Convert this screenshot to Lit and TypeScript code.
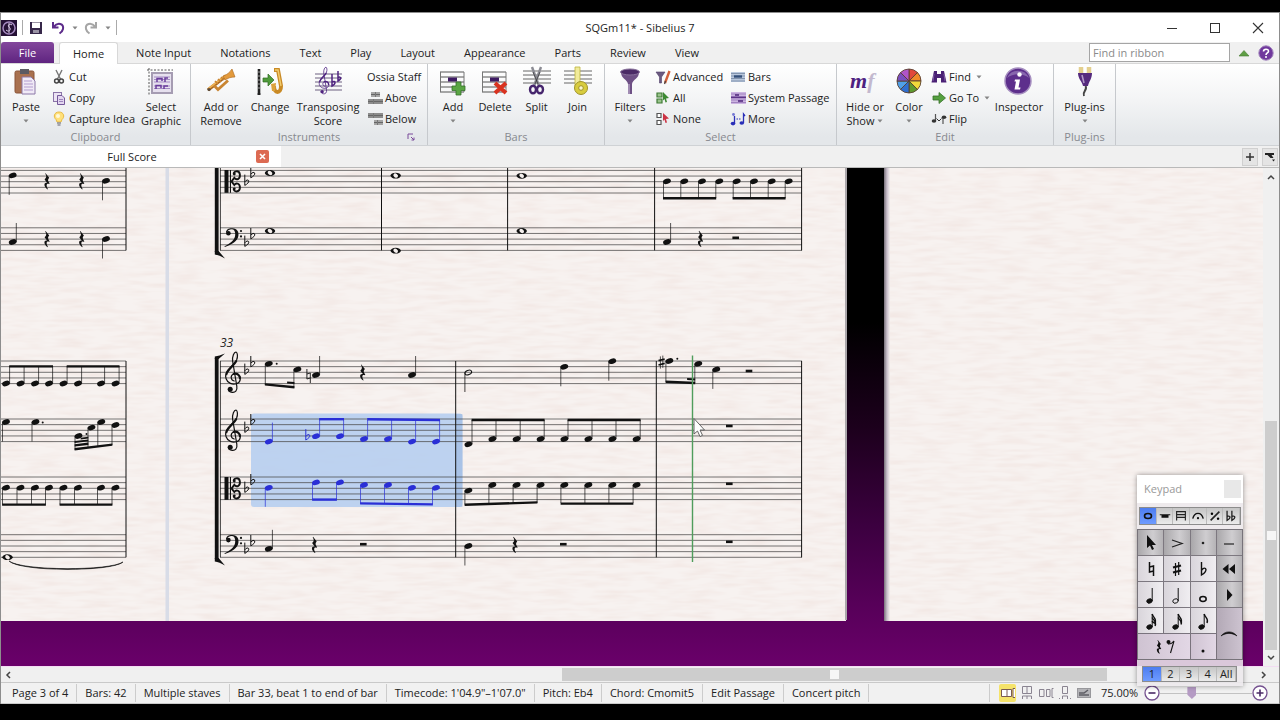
import { LitElement, html, svg, css } from "lit";
import { customElement } from "lit/decorators.js";

const INK = "#111";
const BLUE = "#2a2fd6";

/* ---------- notation primitives ---------- */

const line = (x1: number, y1: number, x2: number, y2: number, c = INK, w = 0.8) =>
  svg`<line x1=${x1} y1=${y1} x2=${x2} y2=${y2} stroke=${c} stroke-width=${w} />`;

const head = (x: number, y: number, c = INK) =>
  svg`<ellipse cx=${x} cy=${y} rx="4" ry="2.6" fill=${c} transform="rotate(-18 ${x} ${y})" />`;

const whole = (x: number, y: number) => svg`
  <ellipse cx=${x} cy=${y} rx="5.2" ry="2.9" fill=${INK} />
  <ellipse cx=${x} cy=${y} rx="2.5" ry="1.9" fill="#f5efed" transform="rotate(35 ${x} ${y})" />`;

const half = (x: number, y: number) => svg`
  <ellipse cx=${x} cy=${y} rx="3.5" ry="2.2" fill="none" stroke=${INK} stroke-width="1" transform="rotate(-22 ${x} ${y})" />
  ${line(x - 3.4, y, x - 3.4, y + 19.5)}`;

const up = (x: number, y: number, to = y - 19, c = INK) => svg`${head(x, y, c)}${line(x + 3.6, y, x + 3.6, to, c, 0.7)}`;
const down = (x: number, y: number, to = y + 19.5, c = INK) => svg`${head(x, y, c)}${line(x - 3.5, y, x - 3.5, to, c, 0.7)}`;

const beam = (x1: number, y1: number, x2: number, y2: number, c = INK, w = 2.4) =>
  svg`<path d="M${x1 - 0.4} ${y1 - w / 2}L${x2 + 0.4} ${y2 - w / 2}V${y2 + w / 2}L${x1 - 0.4} ${y1 + w / 2}Z" fill=${c} />`;

const dot = (x: number, y: number) => svg`<circle cx=${x} cy=${y} r="1" fill=${INK} />`;

const restQ = (x: number, y: number) => svg`
  <path transform="translate(${x} ${y})" fill=${INK}
    d="M-1.4 -8.2L2.2 -3.6C.6 -1.9 .6 -.8 2.6 2.2L2.2 2.7C-.2 1.6 -1.4 3.6 .9 7.6L.5 8C-3.8 4.8 -3.2 .8 .2 1.5L-2.4 -1.9C-.4 -3.8 -.2 -5.2 -1.8 -7.8Z" />`;
const restH = (x: number, y: number) => svg`<rect x=${x - 3.3} y=${y - 1.3} width="6.6" height="2.6" fill=${INK} />`;

const flat = (x: number, y: number, c = INK) => svg`
  <path transform="translate(${x} ${y})" fill="none" stroke=${c} stroke-width="1"
    d="M-1.9 -7.4V3.4C.6 2 2.6 .2 2 -1.4C1.4 -2.6 -.6 -2 -1.9 -.2" />`;
const natural = (x: number, y: number) => svg`
  <path transform="translate(${x} ${y})" fill="none" stroke=${INK} stroke-width=".9"
    d="M-1.6 -7V3L1.8 2M1.8 7V-3L-1.6 -2" />`;
const sharp = (x: number, y: number) => svg`
  <path transform="translate(${x} ${y})" fill="none" stroke=${INK} stroke-width=".7"
    d="M-1.1 -5.6V6.6M1.3 -6.4V5.8" />
  <path transform="translate(${x} ${y})" stroke=${INK} stroke-width="1.7" d="M-3 -1.4L3.2 -3M-3 3L3.2 1.4" />`;

const trebleShape = svg`
  <path fill="none" stroke="currentColor" stroke-width="1.2" stroke-linecap="round"
    d="M1.2 -2.6C-2.4 -3.4 -3 -8 .6 -9.6C4.6 -11.2 8 -7.6 7.2 -3.8C6.4 .2 1 1.4 -2.6 -.2C-7 -2.2 -8.4 -7 -6.4 -11.4C-4.4 -15.6 1.4 -19.2 3.6 -23.6C5 -26.8 4.6 -31 3 -31.6C1 -31.4 -.8 -27.6 -.4 -22.6L3.8 2.6C4.6 7.2 2 9.2 -.8 8.8C-3 8.6 -4.6 7 -4.6 5.4" />
  <path fill="none" stroke="currentColor" stroke-width="2.1" stroke-linecap="round"
    d="M-6.6 -9.4C-5.6 -14 .6 -17.6 3.2 -22.4M.6 -9.6C4 -10.8 7 -8.4 6.9 -5.2" />
  <circle cx="-2.8" cy="5.6" r="2.5" fill="currentColor" />`;
const treble = (x: number, y: number) => svg`<g transform="translate(${x} ${y})" color=${INK}>${trebleShape}</g>`;

const bass = (x: number, y: number) => svg`
  <g transform="translate(${x} ${y})" fill=${INK}>
    <path d="M-8 5.4C-8.4 1.4 -4.6 .2 -1.6 .4C3.4 .8 5 4 4.4 8C3.6 13.2 -2 17 -9.2 19.2L-9.5 18.5C-3.8 15.8 1 12.4 1.2 7C1.4 3.4 .2 1.4 -2.4 1.4C-4.6 1.4 -6 2.4 -6.4 3.4Z" />
    <circle cx="-5.6" cy="5.4" r="2.3" />
    <circle cx="7" cy="3.2" r="1.1" /><circle cx="7" cy="8.6" r="1.1" />
  </g>`;

const alto = (x: number, y: number) => svg`
  <g transform="translate(${x} ${y})" fill=${INK}>
    <rect x="-8.8" y="0" width="4" height="22.8" />
    <rect x="-3.4" y="0" width="1.1" height="22.8" />
    <path fill="none" stroke=${INK} stroke-width="1.900" d="M.4 4.2C0 .8 6 -.2 6.6 4.6C7 9.4 3 10.6 1 7.8L-1.8 11.4L1 15C3 12.2 7 13.4 6.6 18.2C6 23 0 22 .4 18.6" />
    <circle cx="1" cy="4" r="1.4" /><circle cx="1" cy="18.8" r="1.4" />
  </g>`;

const staff = (x1: number, x2: number, top: number) =>
  [0, 1, 2, 3, 4].map((i) => line(x1, top + i * 5.65, x2, top + i * 5.65, "#4a4848", 0.75));

const keyOf = (y: number) => svg`${flat(246.7, y)}${flat(252.7, y - 7.6)}`;

/* ---------- the visible music ---------- */

const systemsLeft = svg`
  ${staff(0, 126, 170.4)}${staff(0, 126, 227.8)}
  ${line(126, 160, 126, 250.4, INK, 1)}
  ${down(12.7, 175.4)}${restQ(47, 181.4)}${restQ(81.7, 181.4)}${down(106, 180.8)}
  ${up(12.7, 242)}${restQ(47, 239.2)}${restQ(81.7, 239.2)}${down(106, 239)}

  ${[361, 419, 477, 534.7].map((t) => staff(0, 126, t))}
  ${line(126, 361, 126, 557.3, INK, 1)}
  ${[6, 20.5, 35, 49, 63.5, 78, 101, 115.5].map((x) => svg`${up(x, 383.5, 366)}${down(x, 487.7, 504.5)}`)}
  ${beam(9.6, 366.4, 52.6, 366.4)}${beam(67.1, 366.4, 119.1, 366.4)}
  ${beam(2.5, 504.6, 45.5, 504.6)}${beam(60, 504.6, 112, 504.6)}
  ${down(6, 422)}${down(35.5, 422)}${dot(42.7, 422.6)}
  ${down(78.5, 436, 450)}${dot(86.5, 434)}${down(91.5, 427.6, 448)}${down(101.3, 422, 447)}${down(115.5, 425, 445)}
  ${beam(75, 449.3, 112, 444.6)}${beam(75, 445.4, 88, 443.8)}${beam(75, 442, 88, 440.4, INK, 1.8)}${beam(81, 438.6, 88, 437.6, INK, 1.8)}
  ${whole(7.5, 557.2)}
  <path d="M9 561C20 572 112 572 123 562C110 571 22 571 9 561Z" fill=${INK} stroke=${INK} stroke-width=".6" />`;

const bracket = (top: number, bottom: number) => svg`
  <rect x="214.8" y=${top} width="3.8" height=${bottom - top} fill=${INK} />
  <path d="M214.8 ${bottom - 1}H218.6L225 ${bottom + 6.5}C221 ${bottom + 4} 218 ${bottom + 3} 214.8 ${bottom + 2.4}Z" fill=${INK} />
  <path d="M214.8 ${top + 1}H218.6L225 ${top - 4.5}C221 ${top - 3} 218 ${top - 2} 214.8 ${top - 1.4}Z" fill=${INK} />`;

const upperSystem = svg`
  ${staff(220, 802, 170.4)}${staff(220, 802, 227.8)}
  ${bracket(100, 252)}
  ${line(220.4, 150, 220.4, 250.4)}
  ${[381.5, 507.6, 654.6, 801.6].map((x) => line(x, 150, x, 250.4, INK, 1))}
  ${alto(233.3, 170)}${bass(234, 227.8)}
  ${keyOf(182)}${keyOf(243)}
  ${whole(270, 173)}${whole(395.7, 175.6)}${whole(521.7, 175.8)}
  ${[667, 684.3, 702, 719.3, 736.7, 754, 771.7, 788.7].map((x) => down(x, 181.3, 198))}
  ${beam(663.4, 198.2, 715.8, 198.2)}${beam(733, 198.2, 785.2, 198.2)}
  ${whole(270, 231)}${whole(395.7, 250.7)}${whole(521.7, 231)}
  ${up(667, 242)}${restQ(700.5, 239)}${restH(735.7, 237.8)}`;

const lowerSystem = svg`
  ${[361, 419, 477, 534.7].map((t) => staff(220, 802, t))}
  ${bracket(358, 559)}
  ${line(220.4, 361, 220.4, 557.3)}
  ${[455.7, 656.3, 801.6].map((x) => line(x, 361, x, 557.3, INK, 1))}
  <text x="220" y="347" class="barnum">33</text>
  ${treble(233, 383.6)}${treble(233, 441.6)}${alto(233.3, 477)}${bass(234, 534.7)}
  ${keyOf(371)}${keyOf(429)}${keyOf(489)}${keyOf(550)}

  ${down(268.8, 363.8, 385)}${dot(276.7, 363.8)}${down(297.4, 369.4, 388)}
  ${beam(265.3, 384.4, 294, 387.2)}${beam(287.5, 382.4, 294, 383, INK, 2)}
  ${natural(308.5, 376)}${up(316, 375)}${restQ(362.7, 372.6)}${up(412, 375)}
  ${half(468.3, 372.5)}${down(564.3, 366.8)}${down(612.3, 361.2)}
  ${sharp(661.5, 362)}${down(669.4, 361, 382)}${dot(677.3, 358.8)}${down(698.3, 363.8, 383)}
  ${beam(666, 381.8, 694.8, 383)}${beam(687.5, 379, 694.8, 379.4, INK, 2)}
  ${down(716.3, 369.4)}${restH(749, 371)}

  ${up(268.8, 441.6, 422.6, BLUE)}${flat(307.7, 436.6, BLUE)}
  ${up(316, 436.2, 418.7, BLUE)}${up(340, 436.2, 418.7, BLUE)}${beam(319.6, 419.2, 343.6, 419.2, BLUE)}
  ${[[364, 439], [388, 439], [412, 441.6], [436, 441.6]].map(([x, y]) => up(x, y, 420, BLUE))}
  ${beam(367.6, 419.2, 439.6, 420, BLUE)}
  ${up(468.4, 444.3, 420)}
  ${[492.4, 516.6, 540.6, 564.4, 588.4, 612.4, 636.6].map((x) => up(x, 439, 420))}
  ${beam(472, 420, 544.2, 420)}${beam(568, 420, 640.2, 420)}${restH(729.3, 426)}

  ${down(268.8, 487.8, 506.8, BLUE)}
  ${down(316, 482.4, 499.4, BLUE)}${down(340, 482.4, 499.4, BLUE)}${beam(312.5, 499.6, 336.5, 499.6, BLUE)}
  ${[[364, 485], [388, 485], [412, 487.8], [436, 487.8]].map(([x, y]) => down(x, y, 504, BLUE))}
  ${beam(360.5, 503.4, 432.5, 504.4, BLUE)}
  ${down(468.4, 490.6, 504.6)}
  ${[492.4, 516.6, 540.6, 564.4, 588.4, 612.4, 636.6].map((x) => down(x, 485, 503))}
  ${beam(465, 504.8, 537, 502.4)}${beam(561, 503.6, 633, 503.6)}${restH(729.3, 483.8)}

  ${up(268.8, 548.8)}${restQ(314.5, 545)}${restH(363.3, 544.2)}
  ${down(468.4, 546)}${restQ(515, 545)}${restH(563.3, 544.2)}${restH(729.3, 541.8)}`;

/* ---------- icons ---------- */

const i32 = (body: unknown) => html`<svg class="i32" viewBox="0 0 32 32" aria-hidden="true">${body}</svg>`;
const i16 = (body: unknown) => html`<svg class="i16" viewBox="0 0 16 16" aria-hidden="true">${body}</svg>`;
const caret = html`<svg class="caret" viewBox="0 0 6 4" aria-hidden="true"><path d="M.5 .5H5.5L3 3.5Z" fill="#858585" /></svg>`;
const rows = (x1: number, x2: number, ys: number[], c = "#555") => ys.map((y) => line(x1, y, x2, y, c, 1));

const big = {
  paste: svg`<rect x="5" y="5" width="19" height="22" rx="1.5" fill="#a9714f" stroke="#8a5538" /><rect x="10" y="3" width="9" height="5" fill="#5b5b62" />
    <path d="M12 11H21L25 15V28H12Z" fill="#f0eaf6" stroke="#8c78a8" /><path d="M14 15H22M14 18H23M14 21H23M14 24H23" stroke="#b39ccf" />`,
  select: svg`<rect x="7" y="7" width="20" height="20" fill="#e6e0ee" stroke="#a59cb2" stroke-width="2" />
    <path d="M9 11H25M9 13.500H25M9 16H25M9 20H25M9 22.500H25" stroke="#a38bc2" /><path d="M12 16V12.500H17V15M20 16V12H23M11 23V19.500H16V22M19 23V20H23" stroke="#6a3c9c" stroke-width="1.500" fill="none" />
    <path d="M4 2V30M2 4H28" stroke="#555" stroke-dasharray="2 1.5" fill="none" />`,
  trumpet: svg`<path d="M3 24L21 10" stroke="#a8651c" stroke-width="3.4" /><path d="M3 23L21 9" stroke="#efb252" stroke-width="1.6" /><path d="M18 10C22 9 25 6 27 3L30 11C26 11 23 12 20 14Z" fill="#e39a3c" stroke="#a8651c" stroke-width=".6" />
    <path d="M9 19.500L13 23.500L23 14.500" fill="none" stroke="#c98532" stroke-width="2.800" /><path d="M10 15L13 18M13 13L16 16M16 11L19 14" stroke="#c98532" stroke-width="1.6" /><circle cx="4" cy="23.5" r="1.6" fill="#5b4a3a" />`,
  change: svg`<path d="M5 3V27" stroke="#222" stroke-width="2.6" /><path d="M5 5V25" stroke="#bbb" stroke-width=".8" stroke-dasharray="2 2" /><path d="M3.500 28H6.500" stroke="#222" stroke-width="2" />
    <path d="M20 4H24L27 20C27 28 20 28 20 20" fill="none" stroke="#c98a25" stroke-width="4" /><path d="M21 4H24L27 20" fill="none" stroke="#f2cd6e" stroke-width="1.400" /><path d="M17 18L22 17L21 25H18Z" fill="#dca23d" />
    <path d="M9 12H14V8L20 14L14 20V16H9Z" fill="#4f9a3a" stroke="#2f6b23" stroke-width=".7" />`,
  transposing: svg`${rows(3, 30, [8, 12, 16, 20, 24], "#6d6080")}<g transform="translate(12 22) scale(.66)" color="#4f2380">${trebleShape}</g>
    <path d="M20 8V20C24 18 24 14 20 16M26 5V15C30 13 29 10 26 11.500" fill="none" stroke="#4f2380" stroke-width="1.500" />`,
  add: svg`${rows(3, 27, [6, 11, 16, 21, 26])}<path d="M3.500 6V26M27 6V26" stroke="#777" /><rect x="11" y="11.500" width="9" height="4" fill="#3e1b63" /><path d="M19 16H24V20H28V24.500H24V29H19V24.500H15V20H19Z" fill="#5aa544" stroke="#33702a" stroke-width=".8" />`,
  del: svg`${rows(3, 27, [6, 11, 16, 21, 26])}<path d="M3.500 6V26M27 6V26" stroke="#777" /><rect x="11" y="11.500" width="9" height="4" fill="#3e1b63" /><path d="M16 17L27 27M27 17L16 27" stroke="#d93320" stroke-width="4" />`,
  split: svg`${rows(2, 30, [5, 9, 13, 17], "#666")}<path d="M11 1L18 20M20 1L13 20" stroke="#8b8b93" stroke-width="2.400" /><path d="M12 6L17 18M19 6L14 18" stroke="#333" stroke-width=".7" />
    <ellipse cx="12" cy="23.500" rx="3" ry="3.800" fill="none" stroke="#46256d" stroke-width="2.400" /><ellipse cx="19" cy="23.500" rx="3" ry="3.800" fill="none" stroke="#46256d" stroke-width="2.400" />`,
  join: svg`${rows(2, 30, [5, 9, 13, 17], "#666")}<path d="M13 1H18V20H13Z" fill="#f1eb9a" stroke="#bdb23c" stroke-width=".8" /><circle cx="19" cy="22" r="6.500" fill="#d8cc3e" stroke="#a0932a" /><circle cx="19" cy="22" r="2.300" fill="#faf7d0" stroke="#a0932a" />`,
  filter: svg`<path d="M7 6C7 13 13 13 14 18V28H18V18C19 13 25 13 25 6Z" fill="#6e5085" /><path d="M15 18V28" stroke="#c4b5d2" stroke-width="1.200" /><ellipse cx="16" cy="6" rx="9.500" ry="3" fill="#4b2b66" stroke="#866f99" />`,
  hide: svg`<text x="1" y="22" class="dyn" fill="#4d2180">m<tspan fill="#c3b9cf">f</tspan></text>`,
  info: svg`<circle cx="15" cy="15" r="13" fill="#5d2f8c" stroke="#a68fc0" stroke-width="1.500" /><path d="M4 12A12 12 0 0 1 26 12C20 7 10 7 4 12Z" fill="#9a7dba" opacity=".7" /><circle cx="16.500" cy="8.500" r="2.200" fill="#fff" /><path d="M12 13.500H17L15.500 21.500H17.500L17 23.500H11.500L13 15.500H11.500Z" fill="#fff" />`,
  plug: svg`<path d="M12 1V8M20 1V8" stroke="#e3cf8e" stroke-width="4.500" /><path d="M9 7H23C23 13 20 15 19 20H14C13 15 9 13 9 7Z" fill="#552a7e" /><path d="M13 9L15 17" stroke="#b299c9" stroke-width="1.500" /><path d="M16.500 20C19 24 13 25 15 30" fill="none" stroke="#444" stroke-width="2" />`,
};

const wheelColours = ["#e2483a", "#f08a2a", "#f0d93a", "#5e9a2e", "#2f6fd0", "#4fa0e8", "#7a4fc0", "#b054c8"];
const wheel = wheelColours.map((c, i) => {
  const a = (i * Math.PI) / 4 - Math.PI / 2;
  const b = a + Math.PI / 4;
  const p = (t: number) => `${(16 + 12 * Math.cos(t)).toFixed(2)} ${(15 + 12 * Math.sin(t)).toFixed(2)}`;
  return svg`<path d="M16 15L${p(a)}A12 12 0 0 1 ${p(b)}Z" fill=${c} stroke="#5a4030" stroke-width=".9" />`;
});

const small = {
  cut: svg`<path d="M5 1L9.500 10M11 1L6.500 10" stroke="#777" stroke-width="1.400" /><circle cx="5.600" cy="12" r="2" fill="none" stroke="#444" stroke-width="1.500" /><circle cx="10.400" cy="12" r="2" fill="none" stroke="#444" stroke-width="1.500" />`,
  copy: svg`<rect x="2.500" y="2.500" width="8" height="9" fill="#ece4f4" stroke="#8b74a8" /><path d="M6.500 5.500H11L13.500 8V14.500H6.500Z" fill="#e2d6ef" stroke="#75589a" /><path d="M8 9.500H12M8 11.500H12" stroke="#9d84bd" />`,
  bulb: svg`<path d="M8 1C3 1 2 6 5 8.500L6 11H10L11 8.500C14 6 13 1 8 1Z" fill="#ffe07a" stroke="#e8bb45" /><circle cx="7" cy="5" r="2" fill="#fff8d8" /><path d="M6 12H10M6.500 14H9.500" stroke="#8d8d95" stroke-width="1.400" />`,
  above: svg`<rect x="4" y="2" width="9" height="5" fill="#a4a4a4" /><rect x="1" y="9" width="15" height="5" fill="#8c8c8c" /><path d="M4 4.500H13M1 11.500H16" stroke="#666" /><path d="M8.500 2V7M6.500 9V14" stroke="#777" />`,
  below: svg`<rect x="1" y="2" width="15" height="5" fill="#8c8c8c" /><rect x="7" y="9" width="9" height="5" fill="#a4a4a4" /><path d="M1 4.500H16M7 11.500H16" stroke="#666" /><path d="M6.500 2V7M10.500 9V14" stroke="#777" />`,
  advanced: svg`<path d="M1 3H10L6.500 8V14H4.500V8Z" fill="#6b5a80" stroke="#53406b" stroke-width=".6" /><path d="M14.500 2L10 14" stroke="#d3603a" stroke-width="2.400" /><path d="M10.500 12L9.500 15" stroke="#444" stroke-width="1.200" />`,
  all: svg`<path d="M2 3H7V7H2ZM2 9H7V13H2Z" fill="#9ac48c" stroke="#3f7a35" stroke-width="1.200" /><path d="M8 2L14 8L11 8.500L12 12L10.500 12.500L9.500 9L8 10.500Z" fill="#3d8a33" />`,
  none: svg`<path d="M2 2.500H6V6.500H2ZM2 9.500H6V13.500H2Z" fill="#fff" stroke="#555" stroke-width="1.200" /><path d="M8 2L14 7.500L11 8L12 11.500L10.500 12L9.500 8.500L8 10Z" fill="#cc3344" />`,
  bars: svg`<rect x="1" y="3" width="14" height="10" fill="#b9c8de" /><path d="M1 4.500H15M1 7H15M1 9.500H15M1 12H15" stroke="#8394ad" /><path d="M4 7.500H12" stroke="#34507a" stroke-width="2.400" />`,
  passage: svg`<rect x="1" y="2" width="15" height="12" fill="#cdb5e2" /><path d="M1 4H16M1 6.500H16M1 10H16M1 12.500H16" stroke="#a183c0" /><path d="M1 7.500H16" stroke="#5d3488" stroke-width="1.500" /><path d="M5 5H9M8 11H13" stroke="#4c237a" stroke-width="1.500" />`,
  more: svg`<path d="M4.500 12.500V5M13.500 12V3L15 5" stroke="#2a2fb8" stroke-width="1.300" fill="none" /><path d="M6.500 8H10.500" stroke="#2a2fb8" stroke-dasharray="1.500 1" /><ellipse cx="3" cy="12.600" rx="2.300" ry="1.800" fill="#2a2fb8" /><ellipse cx="11.800" cy="12" rx="2.300" ry="1.800" fill="#2a2fb8" /><circle cx="3.500" cy="3.500" r="1.400" fill="#7276d4" />`,
  find: svg`<path d="M3 2H6V5H10V2H13L15.500 13.500H10V9H6V13.500H.500Z" fill="#4a2175" /><path d="M3 5L2 12M13 5L14 12" stroke="#8d6bb0" stroke-width=".8" />`,
  goto: svg`<path d="M2 6H8V2.500L14.500 8L8 13.500V10H2Z" fill="#55a03f" stroke="#35702a" stroke-width=".8" />`,
  flip: svg`<path d="M4.500 10V3M12 6V13" stroke="#555" stroke-width="1.200" /><ellipse cx="3" cy="10" rx="2.300" ry="1.700" fill="#333" /><ellipse cx="13" cy="6.300" rx="2.300" ry="1.700" fill="#333" /><path d="M5.500 7.500L8 10L10.500 7.500" fill="none" stroke="#333" />`,
};

/* keypad glyphs, drawn in a 24x24 box */
const kp = (body: unknown) => html`<svg class="kp" viewBox="0 0 24 24" aria-hidden="true">${body}</svg>`;
const stemmed = (flags: number, open = false) => svg`
  <ellipse cx="10.500" cy="18" rx="2.800" ry="2.100" transform="rotate(-20 10.500 18)" fill=${open ? "none" : "#111"} stroke="#111" stroke-width=".9" />
  <path d="M13.200 18V5" stroke="#111" stroke-width="1" />
  ${Array.from({ length: flags }, (_, i) => svg`<path d="M13.200 ${5 + i * 3.5}C14 ${9 + i * 3} 18 ${9 + i * 2} 16 ${14 + i * 1.5}" fill="none" stroke="#111" stroke-width="1.400" />`)}`;

const keys: Array<{ name: string; art: unknown; cls?: string }> = [
  { name: "Mouse input", cls: "dark", art: svg`<path d="M8 4V17L11 14.500L13 19L15 18L13 14H17Z" fill="#111" />` },
  { name: "Accent", cls: "dark", art: svg`<path d="M7 9L17 12.500L7 16" fill="none" stroke="#222" stroke-width="1.300" />` },
  { name: "Staccato", cls: "dark", art: svg`<circle cx="12" cy="12" r="1.300" fill="#222" />` },
  { name: "Tenuto", cls: "dark", art: svg`<path d="M7 13H17" stroke="#222" stroke-width="1.200" />` },
  { name: "Natural", art: svg`<path d="M10.500 5V15L14.500 14M14.500 19V9L10.500 10" fill="none" stroke="#111" stroke-width="1.500" />` },
  { name: "Sharp", art: svg`<path d="M10.500 6V19M13.700 5V18" stroke="#111" stroke-width="1.200" /><path d="M8 10.500L16 8.500M8 15.500L16 13.500" stroke="#111" stroke-width="2.200" />` },
  { name: "Flat", art: svg`<path d="M10.500 5V18C14 16 16 13 14.500 11.500C13 10.500 11 12 10.500 13.500" fill="none" stroke="#111" stroke-width="1.400" />` },
  { name: "Previous layout", cls: "dark", art: svg`<path d="M11.500 7V17L5.500 12ZM18 7V17L12 12Z" fill="#111" />` },
  { name: "Quarter note", art: stemmed(0) },
  { name: "Half note", art: stemmed(0, true) },
  { name: "Whole note", art: svg`<ellipse cx="12" cy="16" rx="3.200" ry="2.400" fill="none" stroke="#111" stroke-width="1.500" />` },
  { name: "Next layout", cls: "dark", art: svg`<path d="M10 6V18L15.500 12Z" fill="#111" />` },
  { name: "32nd note", art: stemmed(3) },
  { name: "16th note", art: stemmed(2) },
  { name: "Eighth note", art: stemmed(1) },
  { name: "Tie", cls: "dark tall", art: svg`<path d="M4 14C8 8.500 16 8.500 20 14C15 10.500 9 10.500 4 14Z" fill="#111" stroke="#111" stroke-width=".6" />` },
  { name: "Rest", cls: "wide", art: svg`<path transform="translate(7 12) scale(.85)" fill="#111" d="M-1.400 -8.200L2.200 -3.600C.6 -1.900 .6 -.8 2.600 2.200L2.200 2.700C-.2 1.600 -1.400 3.600 .9 7.600L.5 8C-3.800 4.800 -3.200 .8 .2 1.500L-2.400 -1.900C-.4 -3.800 -.2 -5.200 -1.800 -7.800Z" /><circle cx="16.500" cy="7" r="2" fill="#111" /><path d="M16 9C19 9.500 20 8.500 22 6L18.500 18" fill="none" stroke="#111" stroke-width="1.100" />` },
  { name: "Rhythm dot", art: svg`<circle cx="12" cy="16" r="1.500" fill="#111" />` },
];

const layouts: Array<[string, unknown]> = [
  ["Common notes", svg`<ellipse cx="8" cy="8" rx="4" ry="2.800" fill="none" stroke="#111" stroke-width="1.800" />`],
  ["More notes", svg`<path d="M2 6H14V7H12V10H4V7H2Z" fill="#111" />`],
  ["Beams", svg`<path d="M3 13V3H13V13M3 6.500H13M3 9.500H13" fill="none" stroke="#222" stroke-width="1.300" />`],
  ["Articulations", svg`<path d="M2 11C4 3 12 3 14 11" fill="none" stroke="#111" stroke-width="1.600" /><circle cx="8" cy="10.500" r="1.300" fill="#111" />`],
  ["Jazz", svg`<path d="M3 13L13 3" stroke="#222" stroke-width="1.800" /><circle cx="4.500" cy="5.500" r="1.400" /><circle cx="11.500" cy="11" r="1.400" />`],
  ["Accidentals", svg`<path d="M3.500 2V13C8 11 8 7 3.500 8.500M9 2V13C13.500 11 13.500 7 9 8.500" fill="none" stroke="#222" stroke-width="1.500" />`],
];

const views: Array<[string, unknown]> = [
  ["Spreads horizontally", svg`<path d="M1.500 4.500H7V11.500H1.500ZM7 4.500H11.500V11.500H7M15 3.500H13V12.500H15" fill="#fff" stroke="#7a5b52" />`],
  ["Spreads vertically", svg`<path d="M3.500 1.500H12.500V8.500H3.500ZM8 1.500V8.500M3.500 14V11H12.500V14M8 11V14" fill="none" stroke="#8a8491" />`],
  ["Single pages horizontally", svg`<path d="M1.500 4.500H6V11.500H1.500ZM8.500 4.500H12V11.500H8.500ZM15.500 3.500H14V12.500H15.500" fill="none" stroke="#8a8491" />`],
  ["Single pages vertically", svg`<path d="M5.500 1.500H10.500V8.500H5.500ZM5.500 14V11H10.500V14M2 13.500H3M13 13.500H14" fill="none" stroke="#8a8491" />`],
  ["Panorama", svg`<rect x="1.500" y="3.500" width="13" height="9" fill="#b4b4b8" stroke="#98989c" /><path d="M3 10H13M3 8H8L12 5" stroke="#5d5d64" fill="none" stroke-width="1.400" />`],
];

const menuTabs = ["Note Input", "Notations", "Text", "Play", "Layout", "Appearance", "Parts", "Review", "View"];
const statusItems = ["Page 3 of 4", "Bars: 42", "Multiple staves", "Bar 33, beat 1 to end of bar", "Timecode: 1'04.9\"–1'07.0\"", "Pitch: Eb4", "Chord: Cmomit5", "Edit Passage", "Concert pitch"];

const bigButton = (art: unknown, label: unknown, arrow = false) =>
  html`<button class="big">${i32(art)}<span>${label}</span>${arrow ? caret : ""}</button>`;
const smallButton = (art: unknown, label: string, arrow = false) =>
  html`<button class="small">${i16(art)}<span>${label}</span>${arrow ? caret : ""}</button>`;

@customElement("app-root")
export class AppRoot extends LitElement {
  static styles = css`
    :host { display: block; height: 100vh; box-sizing: border-box; padding: 12px 0 16px; background: #000; color: #222;
      font: 11px/14px "Open Sans", "Noto Sans", sans-serif; }
    * { box-sizing: border-box; }
    button, input { font: inherit; color: inherit; background: none; border: 0; padding: 0; margin: 0; }
    svg { display: block; flex: none; }
    .window { height: 100%; display: grid; grid-template-rows: 29px 22px 82px 22px minmax(0, 1fr) 16px 22px; background: #f0f0f0;
      border: solid #8d8d8d; border-width: 1px 1px 0; position: relative; }

    .title { display: grid; grid-template-columns: 1fr auto 1fr; align-items: center; background: #fff; }
    .quick { display: flex; align-items: center; gap: 5px; }
    .quick .sep { width: 1px; height: 15px; background: #aaa; }
    .quick button { width: 17px; }
    .winbtns { display: flex; justify-content: flex-end; }
    .winbtns button { width: 43px; height: 28px; display: grid; place-items: center; }
    .i16 { width: 16px; height: 16px; }
    .i32 { width: 32px; height: 32px; }
    .caret { width: 6px; height: 4px; }

    .tabs { display: flex; align-items: stretch; gap: 3px; border-bottom: 1px solid #d8d8d8; }
    .tab { padding: 0 13px; }
    .tabs .file { padding: 0; width: 53px; margin-right: 2px; color: #fff; background: linear-gradient(#83479c, #5f2480); border-radius: 3px 3px 0 0; }
    .tabs .active { background: #fff; border: 1px solid #d8d8d8; border-bottom: 0; margin: 0 2px -1px 0; border-radius: 3px 3px 0 0; }
    .find { margin-left: auto; display: flex; align-items: center; gap: 6px; padding-right: 5px; }
    .find input { width: 141px; height: 19px; border: 1px solid #a5a5a5; background: #fff; padding: 0 3px; }
    .find input::placeholder { color: #8a8a8a; opacity: 1; }

    .ribbon { display: flex; background: linear-gradient(#fff, #f3f4f5 45%, #e4e7ea 90%); border-bottom: 1px solid #cfd2d5; }
    .group { display: grid; grid-template-rows: 63px 16px; padding-top: 2px; border-right: 1px solid #c6c9cd; }
    .group h2 { margin: 0; font-size: 11px; font-weight: 400; color: #87898f; text-align: center; line-height: 16px; position: relative; }
    .body { display: grid; }
    .clipboard .body { grid-template-columns: 50px 81px 58px; }
    .instruments .body { grid-template-columns: 60px 38px 78px 60px; }
    .bars .body { grid-template-columns: 42px 42px 41px 41px; padding: 0 6px 0 4px; }
    .select .body { grid-template-columns: 50px 75px 106px; }
    .edit .body { grid-template-columns: 56px 32px 64px 60px; padding-right: 4px; }
    .plugins .body { grid-template-columns: 61px; }
    .big { display: flex; flex-direction: column; align-items: center; justify-content: flex-start; line-height: 14px; white-space: nowrap; text-align: center; }
    .big .i32 { margin-bottom: 2px; }
    .big > .caret { margin-top: 5px; }
    .big .line { display: flex; align-items: center; justify-content: center; gap: 3px; }
    .stack { display: grid; grid-template-rows: repeat(3, 21px); justify-items: start; }
    .edit .stack { padding-left: 6px; }
    .small { display: flex; align-items: center; gap: 2px; white-space: nowrap; }
    .small .caret { margin-left: 3px; }
    .launcher { position: absolute; right: 12px; top: 4px; }
    .dyn { font: italic bold 22px "Liberation Serif", serif; }

    .docs { display: flex; align-items: center; border-bottom: 1px solid #b9b9b9; }
    .doc { align-self: stretch; width: 280px; background: #fff; display: flex; align-items: center; padding: 0 12px 0 7px; }
    .doc a { flex: 1; text-align: center; color: inherit; text-decoration: none; }
    .close { width: 13px; height: 13px; border-radius: 2px; background: #dc6a52; display: grid; place-items: center; }
    .docbtns { margin-left: auto; display: flex; gap: 4px; padding-right: 1px; }
    .docbtns button { width: 16px; height: 18px; background: #e4e4e4; border: 1px solid #d0d0d0; display: grid; place-items: center; }

    .work { display: grid; grid-template-columns: minmax(0, 1fr) 16px; }
    .stage { overflow: hidden; background: linear-gradient(#000 31%, #1c001c 52%, #3c0040 72%, #560058 87%, #6a006a); }
    .stage svg { width: 100%; height: 100%; }
    .barnum { font: italic 12px "Open Sans", sans-serif; fill: #222; }

    .vbar { display: grid; grid-template-rows: 17px 236px minmax(0, 1fr) 16px; justify-items: center; background: #f0f0f0; }
    .vbar .thumb { grid-row: 3; width: 12px; background: #cdcdcd; display: grid; place-items: center; }
    .vbar svg { place-self: center; }
    .vbar .down { grid-row: 4; }
    .hbar { display: grid; grid-template-columns: 16px 109fr 109fr 28fr 32px; align-items: center; border-top: 1px solid #f3dcf3; }
    .hbar .thumb { grid-column: 3; height: 13px; background: #cdcdcd; display: grid; place-items: center; }
    .grip { width: 9px; height: 9px; background: #f6f6f6; }
    .hbar svg { justify-self: center; }
    .hbar .next { grid-column: 5; }

    .status { display: flex; align-items: center; background: #f1f1f1; border: solid #c9c9c9; border-width: 1px 0; padding-left: 3px; }
    .status > span { padding: 0 8px; border-right: 1px solid #ccc; white-space: nowrap; line-height: 18px; }
    .zoom { margin-left: auto; display: flex; align-items: center; border-left: 1px solid #ccc; padding: 0 11px 0 9px; }
    .views { display: flex; gap: 2px; margin-right: 9px; }
    .views button { width: 17px; height: 18px; display: grid; place-items: center; border-radius: 2px; }
    .views .on { background: #f5e36a; }
    .zoom output { width: 43px; }
    .zoom input { appearance: none; width: 92px; height: 16px; background: linear-gradient(#c2c2c2, #c2c2c2) center / 100% 1px no-repeat; }
    .zoom input::-webkit-slider-thumb { appearance: none; width: 9px; height: 12px; background: #b59bc4; clip-path: polygon(0 0, 100% 0, 100% 65%, 50% 100%, 0 65%); }

    .keypad { position: absolute; right: 36px; bottom: 18px; width: 106px; background: rgba(236, 233, 236, .86); box-shadow: 0 0 5px rgba(0, 0, 0, .4); display: grid; grid-template-columns: minmax(0, 1fr); }
    .keypad header { height: 28px; background: #fff; display: flex; align-items: center; justify-content: space-between; padding: 0 2px 0 7px; color: #999; }
    .keypad header button { width: 17px; height: 18px; background: #e8e8e8; }
    .strip { display: flex; border: 1px solid #8c8c8c; background: linear-gradient(#c5c5c5, #ebebeb); }
    .strip button { flex: 1; display: grid; place-items: center; border-right: 1px solid #bbb; line-height: 14px; }
    .strip .i16 { width: 14px; height: 14px; }
    .strip .on { background: linear-gradient(#4d7df0, #6e9bff); }
    .layouts { margin: 4px 2px; height: 18px; }
    .voices { margin: 6px 6px 4px 5px; height: 16px; }
    .pad { display: grid; grid-template-columns: repeat(4, 1fr); grid-template-rows: repeat(5, 25px); gap: 1px; background: rgba(105, 100, 108, .85); border: 1px solid #77737a; }
    .pad button { display: grid; place-items: center; background: linear-gradient(90deg, rgba(222, 218, 224, .95), rgba(246, 244, 247, .95)); }
    .pad .dark { background: linear-gradient(90deg, #a9a7aa, #cfcdd0 60%, #b5b3b6); }
    .pad .tall { grid-row: 4 / 6; grid-column: 4; background: linear-gradient(90deg, #b3a9b6, #cdc3d0); }
    .pad .wide { grid-column: 1 / 3; }
    .pad .wide, .pad .wide ~ button { background: linear-gradient(90deg, #cfc3d2, #e2d7e5); }
    .kp { width: 24px; height: 24px; }
  `;

  private titleBar() {
    return html`<header class="title">
      <div class="quick">
        ${i16(svg`<rect width="16" height="16" fill="#251135" /><circle cx="8" cy="8" r="6" fill="none" stroke="#a58abf" stroke-width="1.500" /><path d="M5 10C8 13 11 9 8 7C6 5 9 3 11 5M8 3V13" fill="none" stroke="#d6c7e4" />`)}
        <span class="sep"></span>
        <button aria-label="Save">${i16(svg`<path d="M2 2H14V14H2Z" fill="#37284a" /><rect x="4" y="2.500" width="8" height="5.500" fill="#fff" /><rect x="5" y="10" width="6" height="3" fill="#9a93a5" />`)}</button>
        <button aria-label="Undo">${i16(svg`<path d="M3 2V7.500H8.500M3.500 7C8 1.500 14 4 13 9C12.500 11.500 11 12.500 9.500 13.500" fill="none" stroke="#5c2b8a" stroke-width="2" />`)}</button>
        ${caret}
        <button aria-label="Redo">${i16(svg`<path d="M13 2V7.500H7.500M12.500 7C8 1.500 2 4 3 9C3.500 11.500 5 12.500 6.500 13.500" fill="none" stroke="#a5a5a5" stroke-width="2" />`)}</button>
        ${caret}
        <span class="sep"></span>
      </div>
      <span>SQGm11* - Sibelius 7</span>
      <div class="winbtns">
        <button aria-label="Minimize">${i16(svg`<path d="M3 8.500H13" stroke="#333" />`)}</button>
        <button aria-label="Maximize">${i16(svg`<rect x="3.500" y="3.500" width="9" height="9" fill="none" stroke="#333" />`)}</button>
        <button aria-label="Close">${i16(svg`<path d="M3 3L13 13M13 3L3 13" stroke="#333" stroke-width="1.100" />`)}</button>
      </div>
    </header>`;
  }

  private ribbon() {
    return html`<section class="ribbon">
      <div class="group clipboard"><div class="body">
        ${bigButton(big.paste, "Paste", true)}
        <div class="stack">${smallButton(small.cut, "Cut")}${smallButton(small.copy, "Copy")}${smallButton(small.bulb, "Capture Idea")}</div>
        ${bigButton(big.select, html`Select<br />Graphic`)}
      </div><h2>Clipboard</h2></div>
      <div class="group instruments"><div class="body">
        ${bigButton(big.trumpet, html`Add or<br />Remove`)}${bigButton(big.change, "Change")}${bigButton(big.transposing, html`Transposing<br />Score`)}
        <div class="stack"><button class="small">Ossia Staff</button>${smallButton(small.above, "Above")}${smallButton(small.below, "Below")}</div>
      </div><h2>Instruments<svg class="launcher" width="8" height="8" viewBox="0 0 8 8"><path d="M1 6V1H6M4 4L7 7M7 4.500V7H4.500" fill="none" stroke="#7b4a9a" /></svg></h2></div>
      <div class="group bars"><div class="body">
        ${bigButton(big.add, "Add", true)}${bigButton(big.del, "Delete")}${bigButton(big.split, "Split")}${bigButton(big.join, "Join")}
      </div><h2>Bars</h2></div>
      <div class="group select"><div class="body">
        ${bigButton(big.filter, "Filters", true)}
        <div class="stack">${smallButton(small.advanced, "Advanced")}${smallButton(small.all, "All")}${smallButton(small.none, "None")}</div>
        <div class="stack">${smallButton(small.bars, "Bars")}${smallButton(small.passage, "System Passage")}${smallButton(small.more, "More")}</div>
      </div><h2>Select</h2></div>
      <div class="group edit"><div class="body">
        ${bigButton(big.hide, html`Hide or<span class="line">Show ${caret}</span>`)}${bigButton(wheel, "Color", true)}
        <div class="stack">${smallButton(small.find, "Find", true)}${smallButton(small.goto, "Go To", true)}${smallButton(small.flip, "Flip")}</div>
        ${bigButton(big.info, "Inspector")}
      </div><h2>Edit</h2></div>
      <div class="group plugins"><div class="body">${bigButton(big.plug, "Plug-ins", true)}</div><h2>Plug-ins</h2></div>
    </section>`;
  }

  private score() {
    return html`<div class="stage"><svg role="img" aria-label="Full score, bars 29 to 35">
      <defs>
        <filter id="grain" x="0" y="0" width="100%" height="100%">
          <feTurbulence type="fractalNoise" baseFrequency="0.035 0.22" numOctaves="2" seed="4" />
          <feColorMatrix values="0 0 0 0 .84  0 0 0 0 .70  0 0 0 0 .66  .8 0 0 0 -.3" />
        </filter>
        <linearGradient id="edge"><stop offset="0" stop-color="#777079" /><stop offset=".5" stop-color="#c9bfcb" /><stop offset="1" stop-color="#f5efed" /></linearGradient>
      </defs>
      <g transform="translate(-1 -168)">
        <rect x="-50" y="100" width="896" height="521" fill="#f7f2f0" />
        <rect x="888" y="100" width="2400" height="521" fill="#f7f2f0" />
        <rect x="0" y="160" width="846" height="461" filter="url(#grain)" />
        <rect x="890" y="160" width="900" height="461" filter="url(#grain)" />
        <rect x="845" y="100" width="2" height="520" fill="#aaa6aa" />
        <rect x="884" y="100" width="6" height="521" fill="url(#edge)" />
        <rect x="165.500" y="100" width="3.500" height="521" fill="#d8dce7" />
        ${systemsLeft}${upperSystem}
        <rect x="251" y="413.500" width="211.500" height="93.500" rx="3" fill="#b3cdf0" opacity=".85" />
        <rect x="456" y="414" width="6.500" height="93" fill="#8fb0dc" opacity=".45" />
        ${lowerSystem}
        <path d="M692.500 355.500V562" stroke="#4f9d5c" stroke-width="1.400" />
        <path d="M694 418.500V434L697.500 431L700 436.500L702.500 435.300L700 430H704.500Z" fill="#fff" stroke="#555" stroke-width=".9" />
      </g>
    </svg></div>`;
  }

  private keypad() {
    return html`<aside class="keypad" aria-label="Keypad">
      <header>Keypad<button aria-label="Close keypad"></button></header>
      <div class="strip layouts">${layouts.map(([n, art], i) => html`<button class=${i === 0 ? "on" : ""} aria-label=${n}>${i16(art)}</button>`)}</div>
      <div class="pad">${keys.map((k) => html`<button class=${k.cls ?? ""} aria-label=${k.name}>${kp(k.art)}</button>`)}</div>
      <div class="strip voices">${["1", "2", "3", "4", "All"].map((v, i) => html`<button class=${i === 0 ? "on" : ""}>${v}</button>`)}</div>
    </aside>`;
  }

  render() {
    const chevron = (d: string, cls = "") => html`<svg class=${cls} width="8" height="8" viewBox="0 0 8 8"><path d=${d} fill="none" stroke="#444" stroke-width="1.500" /></svg>`;
    return html`<div class="window">
      ${this.titleBar()}
      <nav class="tabs">
        <button class="file">File</button><button class="tab active">Home</button>
        ${menuTabs.map((t) => html`<button class="tab">${t}</button>`)}
        <div class="find">
          <input type="search" placeholder="Find in ribbon" aria-label="Find in ribbon" />
          <button aria-label="Collapse ribbon">${i16(svg`<path d="M8 5.500L13 11H3Z" fill="#5f9e45" stroke="#457a31" stroke-width=".6" />`)}</button>
          <button aria-label="Help">${i16(svg`<circle cx="8" cy="8" r="7.200" fill="#70389c" stroke="#a386bd" /><path d="M5.500 6.500C5.500 3.500 10.500 3.500 10.500 6.200C10.500 8 8 8 8 10" fill="none" stroke="#fff" stroke-width="1.600" /><circle cx="8" cy="12" r="1" fill="#fff" />`)}</button>
        </div>
      </nav>
      ${this.ribbon()}
      <div class="docs">
        <div class="doc"><a href="#score">Full Score</a><button class="close" aria-label="Close tab"><svg width="7" height="7" viewBox="0 0 7 7"><path d="M1 1L6 6M6 1L1 6" stroke="#fff" stroke-width="1.600" /></svg></button></div>
        <div class="docbtns">
          <button aria-label="New tab"><svg width="10" height="10" viewBox="0 0 10 10"><path d="M1 5H9M5 1V9" stroke="#333" stroke-width="1.500" /></svg></button>
          <button aria-label="Switch windows"><svg width="10" height="10" viewBox="0 0 10 10"><path d="M0 1H9V3H6.500L8.500 6H5.500L2.500 3H0ZM7 7.500H10L8.500 9.500Z" fill="#222" /></svg></button>
        </div>
      </div>
      <div class="work">
        ${this.score()}
        <div class="vbar">${chevron("M1 6L4 3L7 6")}<div class="thumb"><span class="grip"></span></div>${chevron("M1 2L4 5L7 2", "down")}</div>
      </div>
      <div class="hbar">${chevron("M5 1L2 4L5 7")}<div class="thumb"><span class="grip"></span></div>${chevron("M3 1L6 4L3 7", "next")}</div>
      <footer class="status">
        ${statusItems.map((s) => html`<span>${s}</span>`)}
        <div class="zoom">
          <div class="views">${views.map(([n, art], i) => html`<button class=${i === 0 ? "on" : ""} aria-label=${n}>${i16(art)}</button>`)}</div>
          <output>75.00%</output>
          <button aria-label="Zoom out">${i16(svg`<circle cx="8" cy="8" r="7" fill="#fff" stroke="#74508f" stroke-width="1.300" /><path d="M4.500 8H11.500" stroke="#4a2a66" stroke-width="1.600" />`)}</button>
          <input type="range" min="0" max="100" value="33" aria-label="Zoom" />
          <button aria-label="Zoom in">${i16(svg`<circle cx="8" cy="8" r="7" fill="#fff" stroke="#74508f" stroke-width="1.300" /><path d="M4.500 8H11.500M8 4.500V11.500" stroke="#4a2a66" stroke-width="1.600" />`)}</button>
        </div>
      </footer>
      ${this.keypad()}
    </div>`;
  }
}
